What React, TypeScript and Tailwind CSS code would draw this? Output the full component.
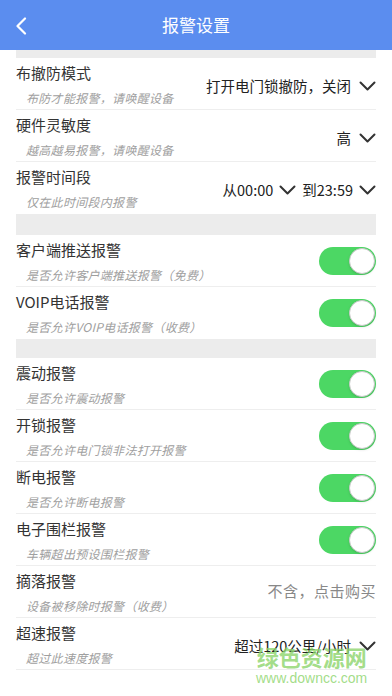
import React from 'react';

function ChevronDown() {
  return (
    <svg width="17" height="10" viewBox="0 0 17 10" fill="none" stroke="#333" strokeWidth={2} strokeLinecap="round" strokeLinejoin="round">
      <path d="M1.5 1.5l7 7 7-7" />
    </svg>
  );
}

function Toggle() {
  return (
    <span className="relative inline-flex h-[28px] w-[57px] items-center rounded-full bg-[#4cd764]">
      <span className="absolute right-[1px] h-[26px] w-[26px] rounded-full border border-[#c8c8c8] bg-white shadow-sm" />
    </span>
  );
}

type Row = {
  title: string;
  sub: string;
  right: React.ReactNode;
  last?: boolean;
};

function SettingRow({ title, sub, right, last }: Row) {
  return (
    <div className={`flex h-[52px] items-center justify-between ${last ? '' : 'border-b border-[#eeeeee]'}`}>
      <div className="flex flex-col">
        <span className="text-[15px] leading-[22px] text-[#333]">{title}</span>
        <span className="mt-[6px] pl-[10px] text-[12px] italic leading-[16px] tracking-[0.3px] text-[#a0a0a0]">{sub}</span>
      </div>
      <div className="flex items-center">{right}</div>
    </div>
  );
}

function Value({ children }: { children: React.ReactNode }) {
  return (
    <span className="flex items-center gap-[8px] pt-[4px] text-[14.5px] text-[#222]">
      {children}
      <ChevronDown />
    </span>
  );
}

export default function App() {
  return (
    <div
      className="relative min-h-[696px] overflow-hidden bg-white"
      style={{ fontFamily: '"Noto Sans CJK SC", "Noto Sans", sans-serif' }}
    >
      <header className="relative flex h-[50px] items-center justify-center bg-[#5b8def] text-white">
        <svg className="absolute left-[15px] top-[17px]" width="12" height="18" viewBox="0 0 12 18" fill="none" stroke="white" strokeWidth={2.2} strokeLinecap="round" strokeLinejoin="round">
          <path d="M10 1.5L2.5 9l7.5 7.5" />
        </svg>
        <span className="text-[17px]">报警设置</span>
      </header>

      <div className="mx-4">
        <div className="h-[8px] bg-[#ececec]" />
        <SettingRow title="布撤防模式" sub="布防才能报警，请唤醒设备" right={<Value>打开电门锁撤防，关闭</Value>} />
        <SettingRow title="硬件灵敏度" sub="越高越易报警，请唤醒设备" right={<Value>高</Value>} />
        <SettingRow
          title="报警时间段"
          sub="仅在此时间段内报警"
          last
          right={
            <span className="flex items-center gap-[6px] pt-[4px] text-[14.5px] text-[#222]">
              从00:00 <ChevronDown /> 到23:59 <ChevronDown />
            </span>
          }
        />
        <div className="h-[21px] bg-[#ececec]" />
        <SettingRow title="客户端推送报警" sub="是否允许客户端推送报警（免费）" right={<Toggle />} />
        <SettingRow title="VOIP电话报警" sub="是否允许VOIP电话报警（收费）" right={<Toggle />} last />
        <div className="h-[19px] bg-[#ececec]" />
        <SettingRow title="震动报警" sub="是否允许震动报警" right={<Toggle />} />
        <SettingRow title="开锁报警" sub="是否允许电门锁非法打开报警" right={<Toggle />} />
        <SettingRow title="断电报警" sub="是否允许断电报警" right={<Toggle />} />
        <SettingRow title="电子围栏报警" sub="车辆超出预设围栏报警" right={<Toggle />} />
        <SettingRow
          title="摘落报警"
          sub="设备被移除时报警（收费）"
          right={<span className="text-[15px] tracking-[0.5px] text-[#888]">不含，点击购买</span>}
        />
        <SettingRow title="超速报警" sub="超过此速度报警" right={<Value>超过120公里/小时</Value>} />
      </div>

      <div className="pointer-events-none absolute left-[256px] top-[643px] flex flex-col items-center whitespace-nowrap text-[#8bd46a]/80">
        <span className="text-[22px] font-bold leading-[26px]">绿色资源网</span>
        <span className="text-[14px] leading-[18px]" style={{ fontFamily: '"Liberation Sans", sans-serif' }}>
          www.downcc.com
        </span>
      </div>
    </div>
  );
}
